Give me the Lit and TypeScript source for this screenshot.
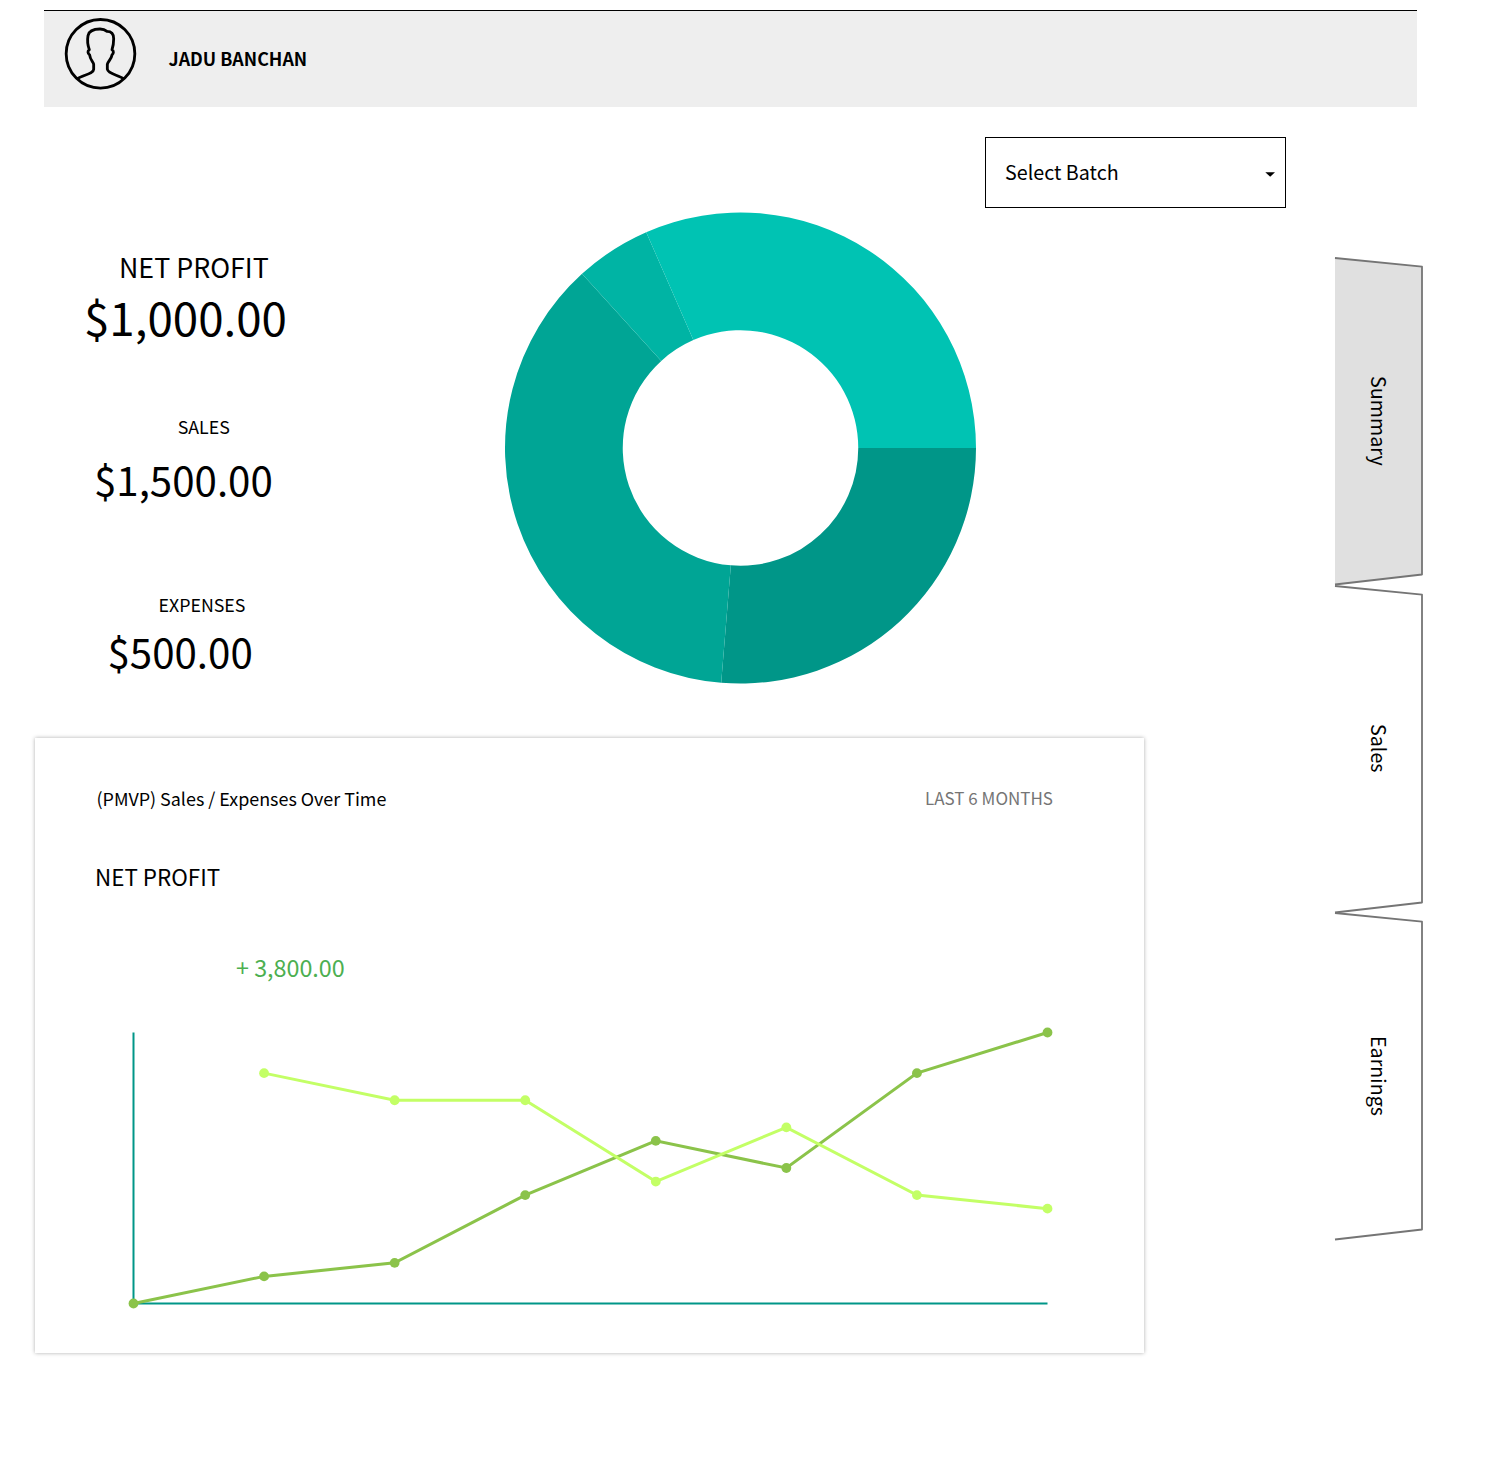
import { LitElement, html, svg, css } from "lit";
import { customElement } from "lit/decorators.js";

const fontStack = css`"Noto Sans CJK SC", "Noto Sans", sans-serif`;

@customElement("profile-header")
class ProfileHeader extends LitElement {
  static styles = css`
    :host {
      display: flex;
      box-sizing: border-box;
      width: 1373px;
      height: 97px;
      margin-left: 43.5px;
      padding-left: 20.5px;
      border-top: 1px solid #000;
      background: #eee;
    }
    .avatar {
      width: 73px;
      height: 73px;
      margin-top: 6px;
      flex: none;
    }
    .name {
      margin: 35px 0 0 31.5px;
      font: bold 17.85px/24px ${fontStack};
      white-space: nowrap;
    }
  `;
  render() {
    return html`
      <svg class="avatar" viewBox="102 51 219 219" fill="none" stroke="#000" stroke-width="8.500" stroke-linejoin="round">
        <circle cx="211.5" cy="161.500" r="103" />
        <path
          d="M143 236C156 225 190 223 191 208V193C190 186 180 178 179 165C173 161 172 152 178 149C173 135 172 118 174 107C177 92 193 87 210 87C219 87 225 89 231 94C246 94 251 103 251 116C251 128 250 138 246 149C252 152 251 160 246 165C244 178 234 184 232 193V208C235 223 266 225 280 236"
        />
      </svg>
      <div class="name">JADU BANCHAN</div>
    `;
  }
}

@customElement("kpi-list")
class KpiList extends LitElement {
  static styles = css`
    :host {
      display: flex;
      flex-direction: column;
      width: 505px;
      font-family: ${fontStack};
      white-space: nowrap;
    }
    .title {
      margin: 140px 0 0 119px;
      font-size: 26.8px;
      line-height: 40px;
    }
    .total {
      margin: 1px 0 0 84px;
      font-size: 45.7px;
      line-height: 56px;
    }
    .label {
      font-size: 17.8px;
      line-height: 24px;
    }
    .amount {
      font-size: 40.25px;
      line-height: 50px;
    }
    .sales-label {
      margin: 70px 0 0 177.7px;
    }
    .sales {
      margin: 16px 0 0 94px;
    }
    .expenses-label {
      margin: 88px 0 0 158.5px;
    }
    .expenses {
      margin: 10px 0 0 107.5px;
    }
  `;
  render() {
    return html`
      <div class="title">NET PROFIT</div>
      <div class="total">$1,000.00</div>
      <div class="label sales-label">SALES</div>
      <div class="amount sales">$1,500.00</div>
      <div class="label expenses-label">EXPENSES</div>
      <div class="amount expenses">$500.00</div>
    `;
  }
}

@customElement("donut-chart")
class DonutChart extends LitElement {
  static styles = css`
    :host {
      display: block;
      width: 472px;
      height: 472px;
      margin-top: 105px;
    }
    .chart {
      display: block;
    }
  `;
  private slices = [
    { from: 0, to: 94.7, fill: "#009688" },
    { from: 94.7, to: 227.7, fill: "#00a595" },
    { from: 227.7, to: 246.4, fill: "#00b4a4" },
    { from: 246.4, to: 360, fill: "#00c3b3" },
  ];
  private arc(from: number, to: number) {
    const c = [235.5, 236];
    const at = (r: number, deg: number) => {
      const a = (deg * Math.PI) / 180;
      return `${(c[0] + r * Math.cos(a)).toFixed(2)} ${(c[1] + r * Math.sin(a)).toFixed(2)}`;
    };
    const outer = 235.5;
    const inner = 117.75;
    return `M${at(outer, from)}A${outer} ${outer} 0 0 1 ${at(outer, to)}L${at(inner, to)}A${inner} ${inner} 0 0 0 ${at(inner, from)}Z`;
  }
  render() {
    return html`<svg class="chart" width="472" height="472" viewBox="0 0 472 472">
      ${this.slices.map((s) => svg`<path d=${this.arc(s.from, s.to)} fill=${s.fill} />`)}
    </svg>`;
  }
}

@customElement("batch-select")
class BatchSelect extends LitElement {
  static styles = css`
    :host {
      display: flex;
      align-items: center;
      justify-content: space-between;
      box-sizing: border-box;
      width: 301px;
      height: 71px;
      margin: 30px 0 0 8px;
      padding: 0 10px 0 19px;
      border: 1px solid #000;
      font: 19.7px/30px ${fontStack};
    }
    .value {
      margin-bottom: 2px;
    }
    .arrow {
      margin-top: 3px;
    }
  `;
  render() {
    return html`<span class="value">Select Batch</span>
      <svg class="arrow" width="10" height="5" viewBox="0 0 10 5"><path d="M0.300 0.200H10L5.200 4.700Z" /></svg>`;
  }
}

@customElement("trend-card")
class TrendCard extends LitElement {
  static styles = css`
    :host {
      display: flex;
      flex-direction: column;
      box-sizing: border-box;
      width: 1109px;
      height: 615px;
      margin-left: 35px;
      background: #fff;
      box-shadow: 0 0 4px rgba(0, 0, 0, 0.32);
      font-family: ${fontStack};
      white-space: nowrap;
    }
    .head {
      display: flex;
      justify-content: space-between;
      margin: 48px 91px 0 61.5px;
      font-size: 17.92px;
      line-height: 24px;
    }
    .range {
      font-size: 17px;
      color: #757575;
    }
    .title {
      margin: 49px 0 0 60px;
      font-size: 22.4px;
      line-height: 34px;
    }
    .delta {
      margin: 57px 0 0 201px;
      font-size: 23.3px;
      line-height: 34px;
      color: #4caf50;
    }
    .chart {
      display: block;
      margin: 39px 0 0 88px;
    }
  `;
  private series = [
    { color: "#8bc34a", start: 0, values: [0, 2, 3, 8, 12, 10, 17, 20] },
    { color: "#c3ff66", start: 1, values: [17, 15, 15, 9, 13, 8, 7] },
  ];
  render() {
    return html`
      <div class="head">
        <span>(PMVP) Sales / Expenses Over Time</span>
        <span class="range">LAST 6 MONTHS</span>
      </div>
      <div class="title">NET PROFIT</div>
      <div class="delta">+ 3,800.00</div>
      <svg class="chart" width="940" height="300" viewBox="0 0 940 300">
        <path d="M10.500 9.500V280.500H924.500" fill="none" stroke="#009688" stroke-width="2" />
        ${this.series.map((s) => {
          const pts = s.values.map((v, i) => [10.5 + (s.start + i) * 130.571, 280.5 - v * 13.55]);
          return svg`<polyline points=${pts.map((p) => p.join(",")).join(" ")} fill="none" stroke=${s.color} stroke-width="3" />
            ${pts.map((p) => svg`<circle cx=${p[0]} cy=${p[1]} r="4.900" fill=${s.color} />`)}`;
        })}
      </svg>
    `;
  }
}

@customElement("side-tab")
class SideTab extends LitElement {
  static properties = { label: {}, active: { type: Boolean } };
  declare label: string;
  declare active: boolean;
  static styles = css`
    :host {
      display: grid;
      width: 89px;
      height: 327.5px;
      font: 19.7px/30px ${fontStack};
    }
    .shape,
    .label {
      grid-area: 1 / 1;
    }
    .shape {
      overflow: visible;
    }
    .label {
      writing-mode: vertical-rl;
      justify-self: start;
      align-self: center;
      margin: 0 0 1px 29px;
      white-space: nowrap;
    }
  `;
  render() {
    return html`
      <svg class="shape" width="89" height="327" viewBox="0 0 89 327">
        <path d="M0 0L87 8.700V316.500L0 326.500Z" fill=${this.active ? "#e0e0e0" : "#fff"} />
        <path d="M0 0L87 8.700V316.500L0 326.500" fill="none" stroke="#757575" stroke-width="1.800" stroke-linejoin="round" />
      </svg>
      <span class="label">${this.label}</span>
    `;
  }
}

@customElement("app-root")
class AppRoot extends LitElement {
  static styles = css`
    :host {
      display: block;
      box-sizing: border-box;
      width: 1497px;
      height: 1463px;
      padding-top: 10px;
      background: #fff;
      color: #000;
      overflow: hidden;
    }
    .body {
      display: flex;
    }
    .content {
      width: 1335px;
    }
    .overview {
      display: flex;
      align-items: flex-start;
      height: 631px;
    }
    .tabs {
      display: flex;
      flex-direction: column;
      margin-top: 151px;
    }
  `;
  render() {
    return html`
      <profile-header></profile-header>
      <div class="body">
        <div class="content">
          <div class="overview">
            <kpi-list></kpi-list>
            <donut-chart></donut-chart>
            <batch-select></batch-select>
          </div>
          <trend-card></trend-card>
        </div>
        <nav class="tabs">
          <side-tab label="Summary" active></side-tab>
          <side-tab label="Sales"></side-tab>
          <side-tab label="Earnings"></side-tab>
        </nav>
      </div>
    `;
  }
}
